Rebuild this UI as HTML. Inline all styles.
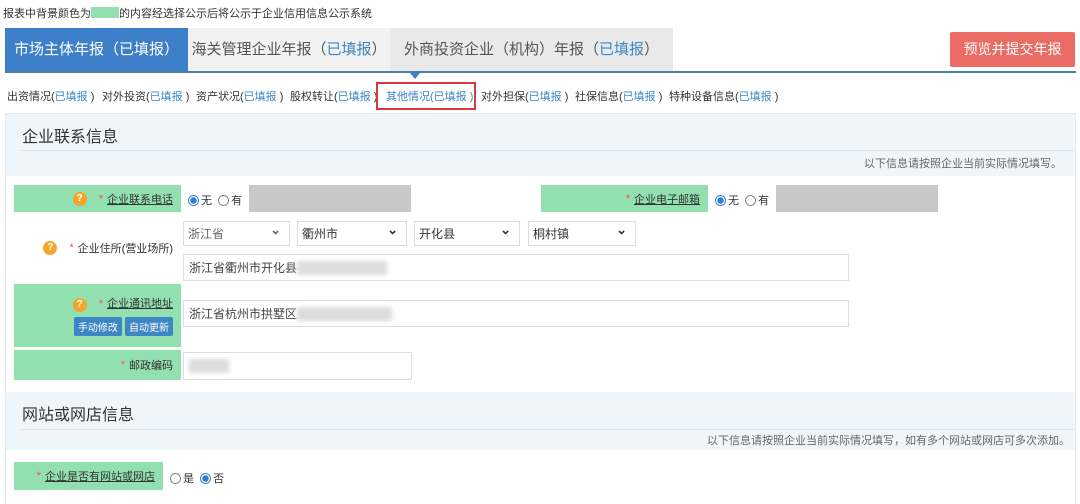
<!DOCTYPE html>
<html><head><meta charset="utf-8"><style>
*{margin:0;padding:0;box-sizing:border-box}
body{width:1080px;height:504px;background:#fff;font-family:"Liberation Sans","Noto Sans CJK SC",sans-serif;color:#333;position:relative;overflow:hidden}
.a{position:absolute;white-space:nowrap}
.b{color:#3b86c8}
.n{position:absolute;top:88px;font-size:11px;color:#333;white-space:nowrap}
.lab{position:absolute;background:#92dfb0;font-size:11px;color:#333;display:flex;align-items:center;justify-content:flex-end;padding-right:8px}
.lab u{text-decoration:underline}
.st{color:#e55;margin-right:4px}
.q{display:inline-block;width:14px;height:14px;border-radius:50%;background:#f4a62a;color:#fff;font-size:10px;line-height:14px;text-align:center;font-weight:bold;margin-right:12px}
.r{display:inline-block;width:11px;height:11px;border-radius:50%;border:1px solid #888;vertical-align:-2px;margin-right:2px;background:#fff}
.r.on{border-color:#3b86c8;background:radial-gradient(circle,#2f7fd0 0 3px,#fff 3.5px)}
.inp{position:absolute;border:1px solid #ddd;background:#fff;font-size:12px;color:#444;padding-left:5px;display:flex;align-items:center}
.sel{position:absolute;border:1px solid #ddd;background:#fff;font-size:12px;color:#333;padding-left:4px;display:flex;align-items:center}
.sel:after{content:"⌄";position:absolute;right:8px;top:0;font-size:13px;font-weight:bold}
.gray{position:absolute;background:#c8c8c8}
.blur{display:inline-block;background:#ddd;filter:blur(2px);height:14px}
</style></head><body>
<div class="a" style="left:3px;top:5px;font-size:11px;color:#333">报表中背景颜色为<span style="display:inline-block;width:28px;height:11px;background:#92dfb0;vertical-align:-1px"></span>的内容经选择公示后将公示于企业信用信息公示系统</div>

<div class="a" style="left:5px;top:28px;width:183px;height:44px;background:#3d7fc9;color:#fff;font-size:15px;line-height:44px;text-align:center">市场主体年报（已填报）</div>
<div class="a" style="left:188px;top:28px;width:202px;height:44px;background:#f2f2f2;color:#555;font-size:15px;line-height:44px;text-align:center">海关管理企业年报（<span class="b">已填报</span>）</div>
<div class="a" style="left:390px;top:28px;width:283px;height:44px;background:#e9e9e9;color:#555;font-size:15px;line-height:44px;text-align:center">外商投资企业（机构）年报（<span class="b">已填报</span>）</div>
<div class="a" style="left:950px;top:32px;width:125px;height:35px;background:#eb6c64;color:#fff;font-size:14px;line-height:35px;text-align:center;border-radius:2px">预览并提交年报</div>
<div class="a" style="left:5px;top:71px;width:1071px;height:2px;background:#4b7fa8"></div>
<div class="a" style="left:410px;top:73px;width:0;height:0;border-left:5px solid transparent;border-right:5px solid transparent;border-top:6px solid #3d7fc9"></div>

<div class="n" style="left:7px">出资情况(<span class="b">已填报</span> )</div>
<div class="n" style="left:102px">对外投资(<span class="b">已填报</span> )</div>
<div class="n" style="left:196px">资产状况(<span class="b">已填报</span> )</div>
<div class="n" style="left:290px">股权转让(<span class="b">已填报</span> )</div>
<div class="n" style="left:386px;color:#3b86c8">其他情况(已填报 )</div>
<div class="n" style="left:481px">对外担保(<span class="b">已填报</span> )</div>
<div class="n" style="left:575px">社保信息(<span class="b">已填报</span> )</div>
<div class="n" style="left:669px">特种设备信息(<span class="b">已填报</span> )</div>
<div class="a" style="left:376px;top:82px;width:100px;height:28px;border:2px solid #d9383d"></div>

<div class="a" style="left:5px;top:113px;width:1071px;height:391px;border:1px solid #e5eaee;border-bottom:none"></div>
<div class="a" style="left:6px;top:114px;width:1069px;height:62px;background:#eef6fc"></div>
<div class="a" style="left:22px;top:123px;font-size:16px;color:#333">企业联系信息</div>
<div class="a" style="left:20px;top:150px;width:1055px;height:1px;background:#dfe8ef"></div>
<div class="a" style="right:18px;top:155px;font-size:11px;color:#666">以下信息请按照企业当前实际情况填写。</div>

<div class="lab" style="left:14px;top:185px;width:167px;height:27px"><span class="q">?</span><span class="st">*</span><u>企业联系电话</u></div>
<div class="a" style="left:188px;top:192px;font-size:11px"><span class="r on"></span>无&nbsp;&nbsp;<span class="r"></span>有</div>
<div class="gray" style="left:249px;top:185px;width:162px;height:27px"></div>
<div class="lab" style="left:541px;top:185px;width:167px;height:27px"><span class="st">*</span><u>企业电子邮箱</u></div>
<div class="a" style="left:715px;top:192px;font-size:11px"><span class="r on"></span>无&nbsp;&nbsp;<span class="r"></span>有</div>
<div class="gray" style="left:776px;top:185px;width:162px;height:27px"></div>

<div class="a" style="left:14px;top:215px;width:167px;height:66px;font-size:11px;display:flex;align-items:center;justify-content:flex-end;padding-right:8px"><span class="q">?</span><span class="st">*</span>企业住所(营业场所)</div>
<div class="sel" style="left:183px;top:221px;width:107px;height:25px;color:#666">浙江省</div>
<div class="sel" style="left:297px;top:221px;width:110px;height:25px">衢州市</div>
<div class="sel" style="left:414px;top:221px;width:106px;height:25px">开化县</div>
<div class="sel" style="left:528px;top:221px;width:108px;height:25px">桐村镇</div>
<div class="inp" style="left:183px;top:254px;width:666px;height:27px">浙江省衢州市开化县<span class="blur" style="width:90px"></span></div>

<div class="lab" style="left:14px;top:284px;width:167px;height:63px;flex-direction:column;align-items:flex-end;justify-content:center"><div><span class="q">?</span><span class="st">*</span><u>企业通讯地址</u></div><div style="margin-top:5px"><span style="display:inline-block;background:#3d86c6;color:#fff;font-size:10px;padding:2px 4px;border-radius:2px">手动修改</span> <span style="display:inline-block;background:#3d86c6;color:#fff;font-size:10px;padding:2px 4px;border-radius:2px">自动更新</span></div></div>
<div class="inp" style="left:183px;top:300px;width:666px;height:27px">浙江省杭州市拱墅区<span class="blur" style="width:95px"></span></div>

<div class="lab" style="left:14px;top:350px;width:167px;height:30px"><span class="st">*</span>邮政编码</div>
<div class="inp" style="left:183px;top:352px;width:229px;height:28px"><span class="blur" style="width:40px"></span></div>

<div class="a" style="left:6px;top:392px;width:1069px;height:58px;background:#eef6fc"></div>
<div class="a" style="left:22px;top:401px;font-size:16px;color:#333">网站或网店信息</div>
<div class="a" style="left:20px;top:429px;width:1055px;height:1px;background:#dfe8ef"></div>
<div class="a" style="right:10px;top:432px;font-size:11px;color:#666">以下信息请按照企业当前实际情况填写，如有多个网站或网店可多次添加。</div>

<div class="lab" style="left:14px;top:462px;width:149px;height:28px"><span class="st">*</span><u>企业是否有网站或网店</u></div>
<div class="a" style="left:170px;top:470px;font-size:11px"><span class="r"></span>是&nbsp;&nbsp;<span class="r on"></span>否</div>
</body></html>
